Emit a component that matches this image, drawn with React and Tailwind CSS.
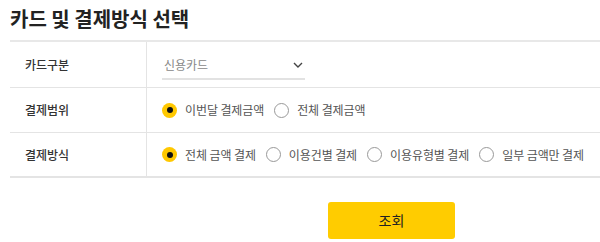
import { useState } from "react";

const font = { fontFamily: '"Noto Sans CJK KR", "Noto Sans", sans-serif' };

function Radio({ checked, label, onClick }) {
  return (
    <button type="button" onClick={onClick} className="flex shrink-0 items-center gap-2 mr-[10px] whitespace-nowrap">
      {checked ? (
        <span className="flex items-center justify-center w-[15px] h-[15px] rounded-full bg-[#ffc800]">
          <span className="w-[6px] h-[6px] rounded-full bg-[#111]"></span>
        </span>
      ) : (
        <span className="w-[15px] h-[15px] rounded-full border border-[#999] bg-white"></span>
      )}
      <span className="text-[12px] tracking-[-0.1px] text-[#555]">{label}</span>
    </button>
  );
}

export default function App() {
  const [range, setRange] = useState(0); // 결제범위
  const [method, setMethod] = useState(0); // 결제방식

  const rowClass = "flex h-[45px] border-b border-[#e4e4e4]";
  const labelClass = "w-[137px] shrink-0 flex items-center pl-[15px] border-r border-[#e4e4e4] text-[12px] font-medium text-[#333]";

  return (
    <div style={font} className="w-[600px] h-[242px] bg-white pl-[10px] overflow-hidden">
      <h2 className="pt-[4px] h-[40px] text-[20px] font-bold leading-[30px] text-[#222]">
        카드 및 결제방식 선택
      </h2>

      <div className="border-t-2 border-[#e8e8e8]">
        {/* 카드구분 */}
        <div className={rowClass + " h-[46px]"}>
          <div className={labelClass}>카드구분</div>
          <div className="flex items-center pl-[15px]">
            <div className="flex items-center justify-between w-[143px] h-[28px] mt-[2px] pl-[2px] pr-[2px] border-b-2 border-[#e2e2e2]">
              <span className="text-[12px] text-[#888]">신용카드</span>
              <svg width="10" height="6" viewBox="0 0 10 6" fill="none">
                <path d="M1 1l4 4 4-4" stroke="#444" strokeWidth="1.4" />
              </svg>
            </div>
          </div>
        </div>

        {/* 결제범위 */}
        <div className={rowClass}>
          <div className={labelClass}>결제범위</div>
          <div className="flex items-center pl-[15px]">
            {["이번달 결제금액", "전체 결제금액"].map((t, i) => (
              <Radio key={t} label={t} checked={range === i} onClick={() => setRange(i)} />
            ))}
          </div>
        </div>

        {/* 결제방식 */}
        <div className={rowClass + " border-b-2"}>
          <div className={labelClass}>결제방식</div>
          <div className="flex items-center pl-[15px]">
            {["전체 금액 결제", "이용건별 결제", "이용유형별 결제", "일부 금액만 결제"].map((t, i) => (
              <Radio key={t} label={t} checked={method === i} onClick={() => setMethod(i)} />
            ))}
          </div>
        </div>
      </div>

      <div className="pt-[24px] pl-[318px]">
        <button className="w-[127px] h-[37px] rounded-[3px] bg-[#ffcc00] text-[14px] text-[#222]">
          조회
        </button>
      </div>
    </div>
  );
}
